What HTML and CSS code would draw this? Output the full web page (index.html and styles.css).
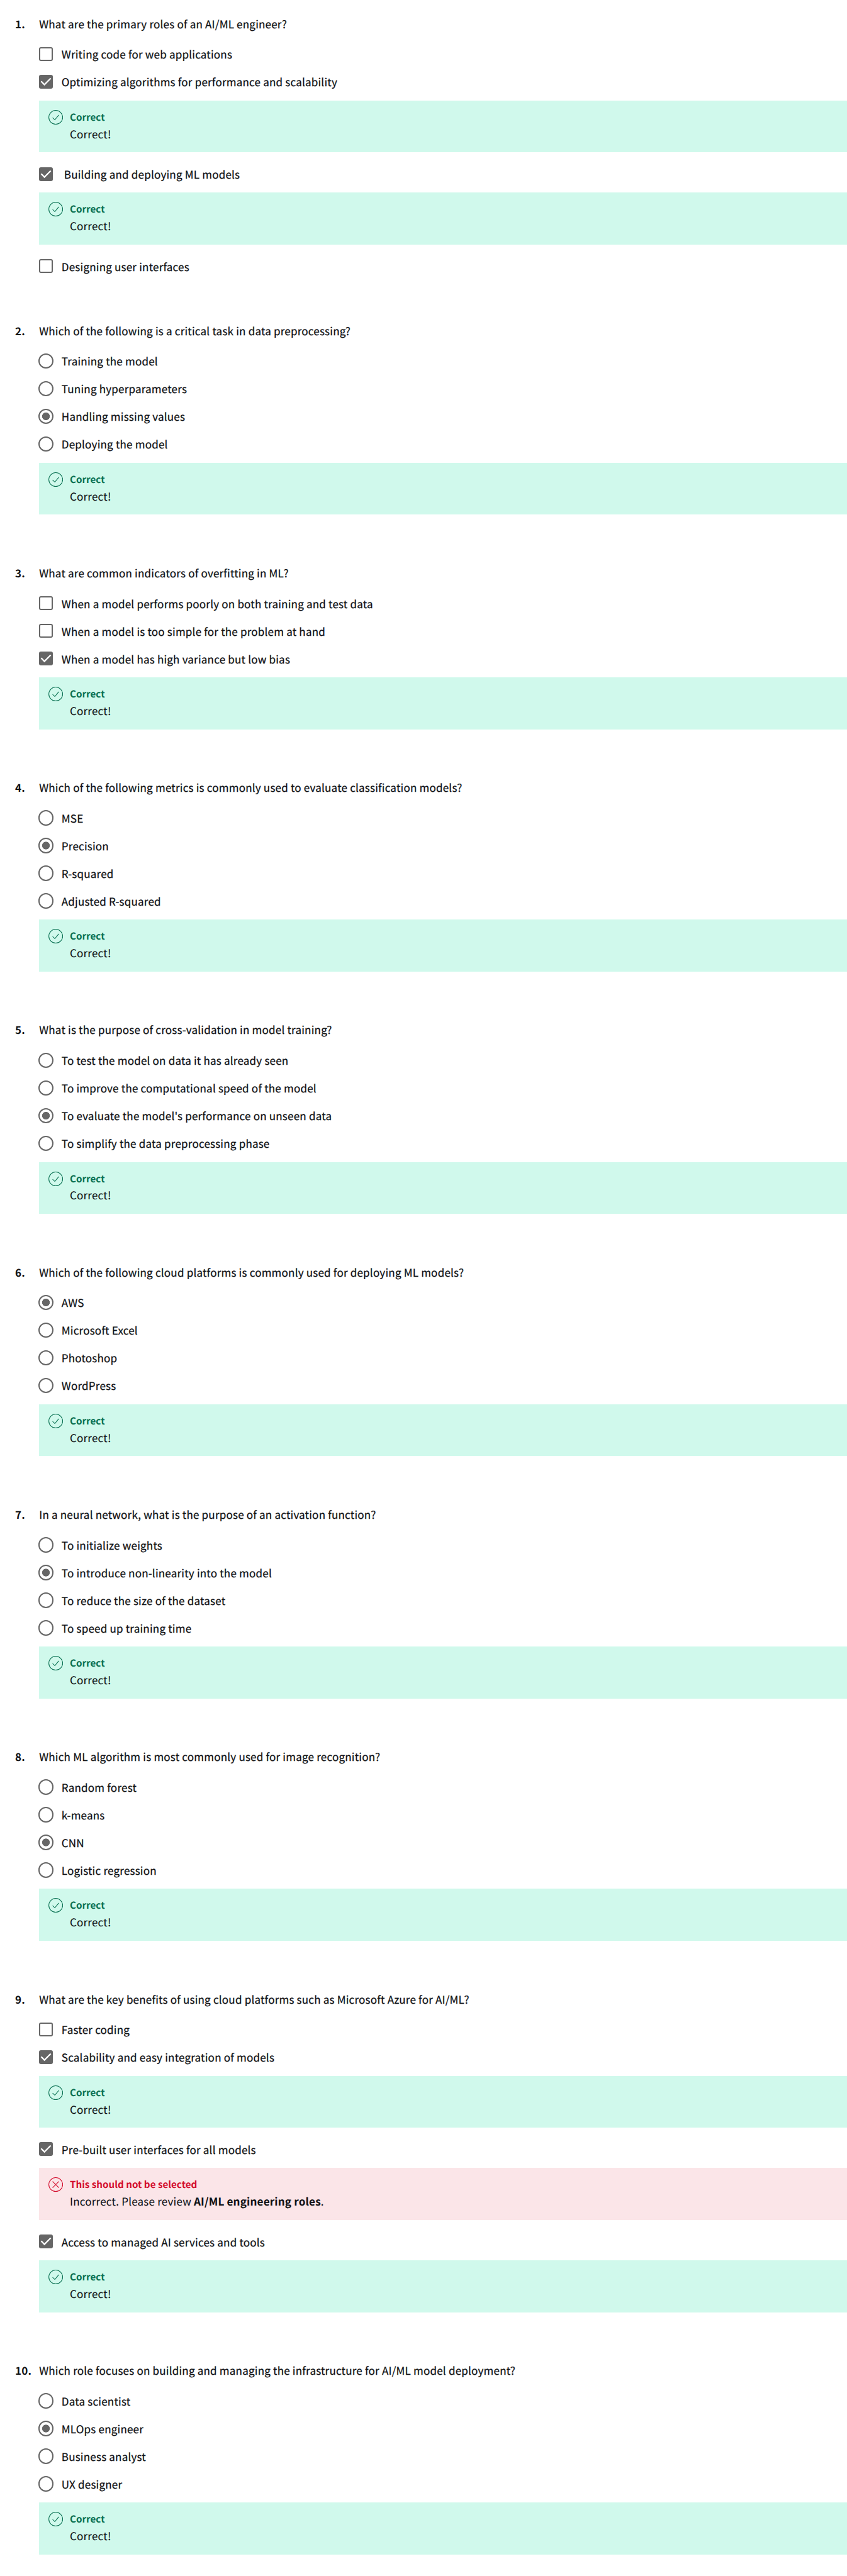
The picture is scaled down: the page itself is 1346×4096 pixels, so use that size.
FILE: index.html
```html
<!DOCTYPE html>
<html lang="en">
<head>
<meta charset="utf-8">
<title>Quiz</title>
<link rel="stylesheet" href="styles.css">
</head>
<body>
<svg class="defs" width="0" height="0" aria-hidden="true">
<symbol id="ok" viewBox="0 0 24 24"><circle cx="12" cy="12" r="11.4"/><path d="M6.8 12.5l3.7 3.6 6.5-8"/></symbol>
<symbol id="bad" viewBox="0 0 24 24"><circle cx="12" cy="12" r="11.4"/><path d="M6.8 6.8l10.4 10.4M17.2 6.8L6.8 17.2"/></symbol>
<symbol id="tick" viewBox="0 0 22 22"><path d="M3.4 10.2l5.2 5.4 10-10.2"/></symbol>
</svg>
<main class="quiz">

<section class="question">
<h2 class="title"><span class="num">1.</span>What are the primary roles of an AI/ML engineer?</h2>
<div class="option"><span class="box"></span>Writing code for web applications</div>
<div class="option"><span class="box on"><svg><use href="#tick"/></svg></span>Optimizing algorithms for performance and scalability</div>
<div class="feedback"><svg><use href="#ok"/></svg><div><p class="verdict">Correct</p><p class="note">Correct!</p></div></div>
<div class="option"><span class="box on"><svg><use href="#tick"/></svg></span>&nbsp;Building and deploying ML models</div>
<div class="feedback"><svg><use href="#ok"/></svg><div><p class="verdict">Correct</p><p class="note">Correct!</p></div></div>
<div class="option"><span class="box"></span>Designing user interfaces</div>
</section>

<section class="question">
<h2 class="title"><span class="num">2.</span>Which of the following is a critical task in data preprocessing?</h2>
<div class="option"><span class="radio"></span>Training the model</div>
<div class="option"><span class="radio"></span>Tuning hyperparameters</div>
<div class="option"><span class="radio on"></span>Handling missing values</div>
<div class="option"><span class="radio"></span>Deploying the model</div>
<div class="feedback"><svg><use href="#ok"/></svg><div><p class="verdict">Correct</p><p class="note">Correct!</p></div></div>
</section>

<section class="question">
<h2 class="title"><span class="num">3.</span>What are common indicators of overfitting in ML?</h2>
<div class="option"><span class="box"></span>When a model performs poorly on both training and test data</div>
<div class="option"><span class="box"></span>When a model is too simple for the problem at hand</div>
<div class="option"><span class="box on"><svg><use href="#tick"/></svg></span>When a model has high variance but low bias</div>
<div class="feedback"><svg><use href="#ok"/></svg><div><p class="verdict">Correct</p><p class="note">Correct!</p></div></div>
</section>

<section class="question">
<h2 class="title"><span class="num">4.</span>Which of the following metrics is commonly used to evaluate classification models?</h2>
<div class="option"><span class="radio"></span>MSE</div>
<div class="option"><span class="radio on"></span>Precision</div>
<div class="option"><span class="radio"></span>R-squared</div>
<div class="option"><span class="radio"></span>Adjusted R-squared</div>
<div class="feedback"><svg><use href="#ok"/></svg><div><p class="verdict">Correct</p><p class="note">Correct!</p></div></div>
</section>

<section class="question">
<h2 class="title"><span class="num">5.</span>What is the purpose of cross-validation in model training?</h2>
<div class="option"><span class="radio"></span>To test the model on data it has already seen</div>
<div class="option"><span class="radio"></span>To improve the computational speed of the model</div>
<div class="option"><span class="radio on"></span>To evaluate the model's performance on unseen data</div>
<div class="option"><span class="radio"></span>To simplify the data preprocessing phase</div>
<div class="feedback"><svg><use href="#ok"/></svg><div><p class="verdict">Correct</p><p class="note">Correct!</p></div></div>
</section>

<section class="question">
<h2 class="title"><span class="num">6.</span>Which of the following cloud platforms is commonly used for deploying ML models?</h2>
<div class="option"><span class="radio on"></span>AWS</div>
<div class="option"><span class="radio"></span>Microsoft Excel</div>
<div class="option"><span class="radio"></span>Photoshop</div>
<div class="option"><span class="radio"></span>WordPress</div>
<div class="feedback"><svg><use href="#ok"/></svg><div><p class="verdict">Correct</p><p class="note">Correct!</p></div></div>
</section>

<section class="question">
<h2 class="title"><span class="num">7.</span>In a neural network, what is the purpose of an activation function?</h2>
<div class="option"><span class="radio"></span>To initialize weights</div>
<div class="option"><span class="radio on"></span>To introduce non-linearity into the model</div>
<div class="option"><span class="radio"></span>To reduce the size of the dataset</div>
<div class="option"><span class="radio"></span>To speed up training time</div>
<div class="feedback"><svg><use href="#ok"/></svg><div><p class="verdict">Correct</p><p class="note">Correct!</p></div></div>
</section>

<section class="question">
<h2 class="title"><span class="num">8.</span>Which ML algorithm is most commonly used for image recognition?</h2>
<div class="option"><span class="radio"></span>Random forest</div>
<div class="option"><span class="radio"></span>k-means</div>
<div class="option"><span class="radio on"></span>CNN</div>
<div class="option"><span class="radio"></span>Logistic regression</div>
<div class="feedback"><svg><use href="#ok"/></svg><div><p class="verdict">Correct</p><p class="note">Correct!</p></div></div>
</section>

<section class="question">
<h2 class="title"><span class="num">9.</span>What are the key benefits of using cloud platforms such as Microsoft Azure for AI/ML?</h2>
<div class="option"><span class="box"></span>Faster coding</div>
<div class="option"><span class="box on"><svg><use href="#tick"/></svg></span>Scalability and easy integration of models</div>
<div class="feedback"><svg><use href="#ok"/></svg><div><p class="verdict">Correct</p><p class="note">Correct!</p></div></div>
<div class="option"><span class="box on"><svg><use href="#tick"/></svg></span>Pre-built user interfaces for all models</div>
<div class="feedback wrong"><svg><use href="#bad"/></svg><div><p class="verdict">This should not be selected</p><p class="note">Incorrect. Please review <b>AI/ML engineering roles</b>.</p></div></div>
<div class="option"><span class="box on"><svg><use href="#tick"/></svg></span>Access to managed AI services and tools</div>
<div class="feedback"><svg><use href="#ok"/></svg><div><p class="verdict">Correct</p><p class="note">Correct!</p></div></div>
</section>

<section class="question">
<h2 class="title"><span class="num">10.</span>Which role focuses on building and managing the infrastructure for AI/ML model deployment?</h2>
<div class="option"><span class="radio"></span>Data scientist</div>
<div class="option"><span class="radio on"></span>MLOps engineer</div>
<div class="option"><span class="radio"></span>Business analyst</div>
<div class="option"><span class="radio"></span>UX designer</div>
<div class="feedback"><svg><use href="#ok"/></svg><div><p class="verdict">Correct</p><p class="note">Correct!</p></div></div>
</section>

</main>
</body>
</html>
```
FILE: styles.css
```css
* {
  box-sizing: border-box;
}

html,
body {
  height: 4096px;
  overflow: hidden;
}

body {
  margin: 0;
  background: #fff;
  color: #0f1114;
  font: 400 17px/24px "Noto Sans CJK SC", "Noto Sans", sans-serif;
  letter-spacing: 0.21px;
  text-rendering: geometricPrecision;
}

.defs {
  display: block;
}

.quiz {
  display: flex;
  flex-direction: column;
  gap: 60.5px;
  padding-top: 25.7px;
}

.question {
  padding-left: 62px;
}

.title {
  display: flex;
  margin: 0 0 22.2px -38px;
  font: inherit;
  white-space: nowrap;
}

.title,
.option {
  -webkit-text-stroke: 0.25px #0f1114;
}

.num {
  width: 38.2px;
  font-weight: 700;
  -webkit-text-stroke: 0;
}

.option {
  display: flex;
  height: 44px;
  padding-top: 2.6px;
  white-space: nowrap;
}

/* Checkbox */
.box {
  width: 22px;
  height: 22px;
  margin: 0.5px 13.8px 0 0;
  border: 2px solid #666;
  border-radius: 3px;
}

.box.on {
  border: 0;
  background: #666;
}

.box svg {
  display: block;
  width: 22px;
  height: 22px;
  fill: none;
  stroke: #fff;
  stroke-width: 2.2;
}

/* Radio button */
.radio {
  width: 24.4px;
  height: 24.4px;
  margin: -0.6px 12.8px 0 -1.4px;
  border: 2px solid #666;
  border-radius: 50%;
}

.radio.on {
  background: radial-gradient(circle, #666 5.7px, transparent 6.5px);
}

/* Answer feedback */
.feedback {
  display: flex;
  height: 82.6px;
  margin-bottom: 20px;
  padding: 15px 0 0 15.3px;
  background: #d0f9ec;
}

.feedback svg {
  width: 23.2px;
  height: 23.2px;
  margin-right: 10.5px;
  fill: none;
  stroke: #087051;
  stroke-width: 1.1;
}

.verdict,
.note {
  margin: 0;
}

.verdict {
  color: #087051;
  font-size: 15.2px;
  font-weight: 700;
  line-height: 22px;
  letter-spacing: 0;
}

.note {
  margin-top: 3.8px;
  -webkit-text-stroke: 0.1px #0f1114;
}

.note b {
  font-weight: 700;
}

.wrong {
  background: #fbe5e8;
}

.wrong .verdict {
  color: #d30b2b;
}

.wrong svg {
  stroke: #d30b2b;
}
```
